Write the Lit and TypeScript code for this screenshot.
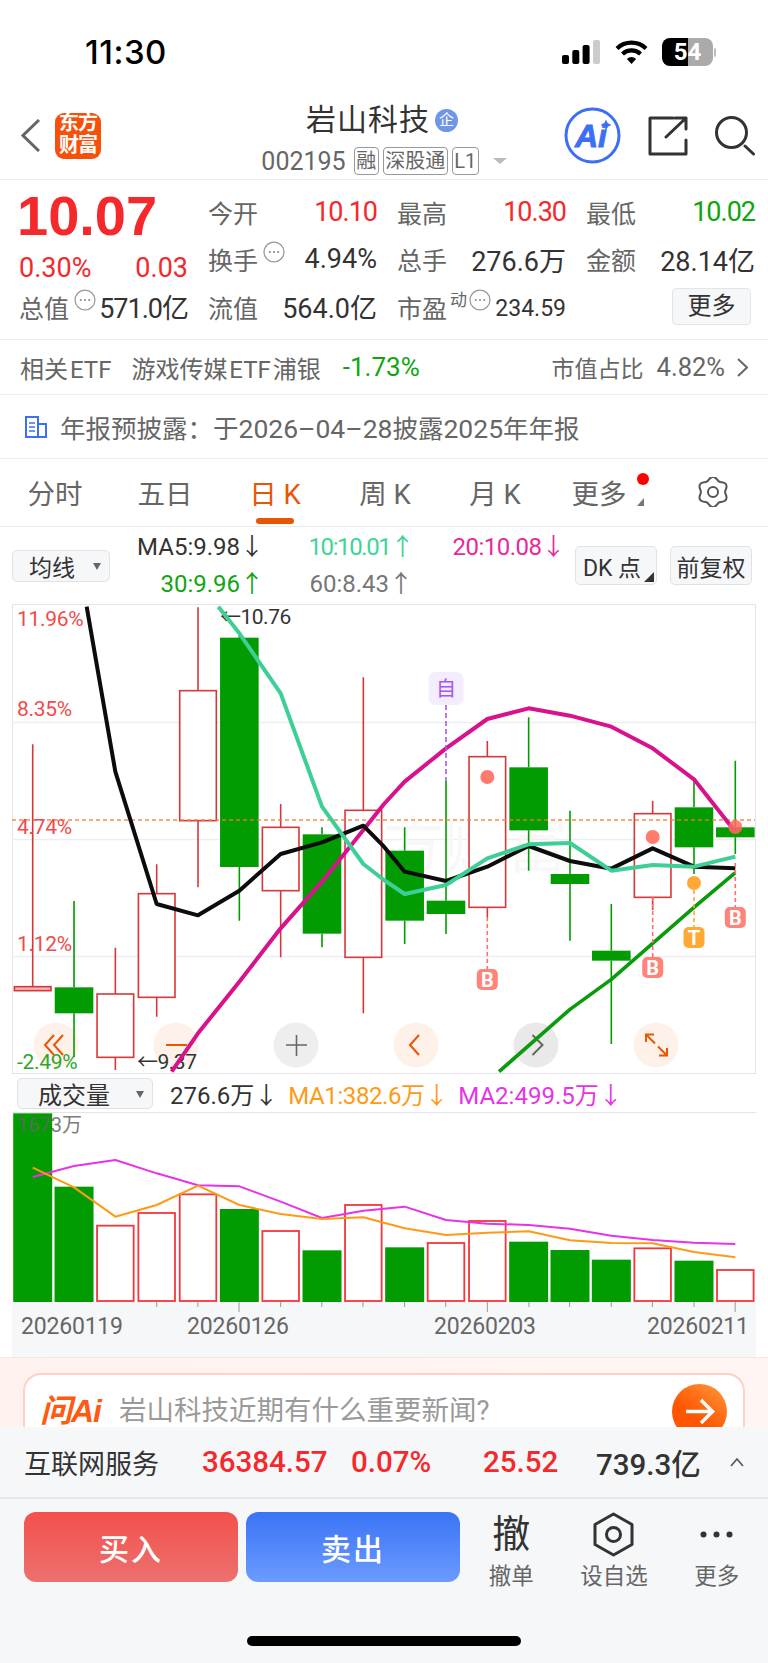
import { LitElement, html, css, svg } from "lit";
import { customElement } from "lit/decorators.js";

const RED = "#d8373a";
const GREEN = "#029c02";

// chart data below is read off the reference, in zoom units: page y = 600 + z / 3
const zy = (z: number) => 600 + z / 3;
const cx = (i: number) => 32.7 + 41.33 * i;

// wick top, wick bottom, body top, body bottom, rising
const candles: [number, number, number, number, boolean][] = [
  [433, 1160, 1160, 1172, true],
  [903, 1372, 1162, 1240, false],
  [1043, 1410, 1182, 1372, true],
  [793, 1250, 881, 1192, true],
  [22, 862, 272, 662, true],
  [100, 962, 113, 801, false],
  [612, 1072, 682, 872, true],
  [682, 1042, 703, 1001, false],
  [232, 1240, 631, 1072, true],
  [682, 1032, 752, 962, false],
  [542, 1002, 902, 942, false],
  [423, 952, 470, 922, true],
  [352, 812, 502, 691, false],
  [632, 1022, 822, 852, false],
  [912, 1332, 1052, 1082, false],
  [602, 930, 641, 892, true],
  [532, 822, 622, 742, false],
  [482, 762, 682, 712, false],
];

// x, y both in the 3x crop of the chart
const pts = (list: number[][], dx = 0) =>
  list.map(([x, y]) => `${dx + x / 3},${zy(y)}`).join(" ");

const ma5 =
  pts([[260, 20], [346, 515], [470, 912], [594, 946], [718, 872], [842, 762], [966, 727], [1090, 677]]) +
  " " +
  pts([[0, 740], [62, 815], [186, 843], [310, 800], [434, 738], [558, 783], [682, 806], [806, 745], [930, 800], [1054, 805]], 384);
const ma10 =
  pts([[655, 20], [718, 100], [842, 280], [966, 620], [1090, 792], [1152, 840]]) +
  " " +
  pts([[62, 882], [186, 855], [310, 775], [434, 733], [558, 729], [682, 812], [806, 795], [930, 800], [1054, 770]], 384);
const ma20 =
  pts([[515, 1415], [594, 1300], [718, 1145], [842, 985], [966, 845], [1090, 690], [1152, 612]]) +
  " " +
  pts([[62, 545], [186, 445], [310, 357], [434, 325], [558, 347], [682, 380], [806, 445], [930, 538], [1054, 695]], 384);
const ma30 = pts([[345, 1415], [558, 1228], [682, 1138], [806, 1030], [930, 922], [1054, 818]], 384);

// volume chart, crop is 2.0417x wide and 3x tall
const vx = (z: number) => z / 2.0417;
const vy = (z: number) => 1070 + z / 3;
const volTops = [130, 350, 467, 429, 373, 417, 483, 541, 405, 532, 519, 453, 515, 540, 569, 535, 572, 600];
const volUp = [0, 0, 1, 1, 1, 0, 1, 0, 1, 0, 1, 1, 0, 0, 0, 1, 0, 1];
const ma1 = [293, 352, 440, 405, 347, 405, 432, 447, 442, 475, 495, 488, 484, 511, 519, 520, 546, 562];
const ma2 = [321, 288, 270, 310, 346, 349, 395, 444, 422, 410, 450, 461, 465, 476, 497, 510, 518, 522];
const volLine = (list: number[]) => list.map((y, i) => `${cx(i)},${vy(y)}`).join(" ");

// round gear outline
const gearPath = () => {
  const out: string[] = [];
  for (let a = 0; a < 360; a += 6) {
    const t = (a * Math.PI) / 180;
    const r = 13.6 + 1.5 * Math.cos(6 * t);
    out.push(`${(16 + r * Math.sin(t)).toFixed(1)},${(15 - r * Math.cos(t)).toFixed(1)}`);
  }
  return out.join(" ");
};

const infoDots = html`<svg class="info" viewBox="0 0 21 21">
  <circle cx="10.5" cy="10.5" r="9.5" fill="none" stroke="#999" stroke-width="1.2"></circle>
  <circle cx="6.5" cy="10.5" r="1" fill="#888"></circle>
  <circle cx="10.5" cy="10.5" r="1" fill="#888"></circle>
  <circle cx="14.5" cy="10.5" r="1" fill="#888"></circle>
</svg>`;

@customElement("k-chart")
class KChart extends LitElement {
  static styles = css`
    :host {
      display: block;
      height: 471px;
    }
    svg {
      display: block;
      font-family: Roboto, "Noto Sans CJK SC", sans-serif;
    }
  `;

  tag(x: number, top: number, label: string, color: string) {
    return svg`
      <rect x=${x - 10.5} y=${top} width="21" height="21" rx="5" fill=${color}></rect>
      <text x=${x} y=${top + 17.5} font-size="20" font-weight="700" fill="#fff" text-anchor="middle">${label}</text>`;
  }

  render() {
    const buttons = [
      [56, "#fdf1ea"],
      [176, "#fdf1ea"],
      [296, "#eeeeee"],
      [416, "#fdf1ea"],
      [536, "#e9e9e9"],
      [656, "#fdf1ea"],
    ] as [number, string][];
    return html`<svg width="768" height="471" viewBox="0 604 768 471">
      <rect x="12.5" y="604.5" width="743" height="469" fill="#fff" stroke="#e4e5ec"></rect>
      <path d="M12 722.5H755M12 839.5H755M12 956.5H755" stroke="#edeef3" stroke-width="1.5"></path>
      <text x="320" y="868" font-size="62" fill="#f8f8f9">东方财富</text>
      ${buttons.map(([x, c]) => svg`<circle cx=${x} cy="1045" r="22.5" fill=${c}></circle>`)}
      <g fill="none" stroke="#ea5504" stroke-width="2">
        <path d="M54 1035l-9 10 9 10M63 1035l-9 10 9 10"></path>
        <path d="M166 1045h21"></path>
        <path d="M419 1035l-9 10 9 10"></path>
        <path d="M646 1042V1034.5H654M646 1034.5L655 1043.5M667 1048V1055.5H659M667 1055.5L658 1046.5"></path>
      </g>
      <path d="M286 1045h21M296.5 1035v21" stroke="#666" stroke-width="1.6" fill="none"></path>
      <path d="M532.5 1035l10 10-10 10" stroke="#666" stroke-width="2" fill="none"></path>
      ${candles.map(([wt, wb, bt, bb, up], i) => {
        const x = cx(i);
        const color = up ? RED : GREEN;
        const body = up
          ? svg`<rect x=${x - 18.3} y=${zy(bt)} width="36.6" height=${zy(bb) - zy(bt)} fill=${i === 0 ? "#f3b5b5" : "#fff"} stroke=${color} stroke-width="1.6"></rect>`
          : svg`<rect x=${x - 19.3} y=${zy(bt)} width="38.6" height=${zy(bb) - zy(bt)} fill=${color}></rect>`;
        return svg`<path d="M${x} ${zy(wt)}V${zy(bt)}M${x} ${zy(bb)}V${zy(wb)}" stroke=${color} stroke-width="1.6"></path>${body}`;
      })}
      <path d="M12 820H755" stroke="#f47b2c" stroke-width="1.5" stroke-dasharray="4 3" opacity=".85"></path>
      <g font-size="21" fill="#f04a4a" letter-spacing="-.3">
        <text x="17" y="626">11.96%</text>
        <text x="17" y="716">8.35%</text>
        <text x="17" y="834">4.74%</text>
        <text x="17" y="951">1.12%</text>
        <text x="17" y="1069" fill="#2aa82a">-2.49%</text>
      </g>
      <g font-size="21" fill="#333" letter-spacing="-.5">
        <text x="220" y="624">←10.76</text>
        <text x="137" y="1069">←9.37</text>
      </g>
      <g fill="none" stroke-linejoin="round">
        <polyline points=${ma30} stroke="#0b9a0b" stroke-width="3.6"></polyline>
        <polyline points=${ma20} stroke="#d8128a" stroke-width="4"></polyline>
        <polyline points=${ma5} stroke="#0c0c0c" stroke-width="4"></polyline>
        <polyline points=${ma10} stroke="#3dcf96" stroke-width="4"></polyline>
      </g>
      <rect x="428.5" y="672" width="35" height="33" rx="7" fill="#f4edff"></rect>
      <text x="446" y="696" font-size="20" fill="#a855f7" text-anchor="middle">自</text>
      <path d="M446 705V781" stroke="#a855f7" stroke-width="1.6" stroke-dasharray="5 3"></path>
      <g stroke-width="1.6" stroke-dasharray="4 3">
        <path d="M487.3 917V969M652.7 897V957M735.3 863V907" stroke="#ff6f66"></path>
        <path d="M694 883V927" stroke="#ffa833"></path>
      </g>
      <circle cx="487.3" cy="777" r="7" fill="#ff7b6e"></circle>
      <circle cx="652.7" cy="837" r="7" fill="#ff7b6e"></circle>
      <circle cx="694" cy="883" r="7" fill="#ffa833"></circle>
      <circle cx="735.3" cy="827" r="7" fill="#ff6a60" opacity=".85"></circle>
      ${this.tag(487.3, 969, "B", "#ff8378")}
      ${this.tag(652.7, 957, "B", "#ff8378")}
      ${this.tag(694, 927, "T", "#ffa833")}
      ${this.tag(735.3, 907, "B", "#ff8378")}
    </svg>`;
  }
}

@customElement("vol-chart")
class VolChart extends LitElement {
  static styles = css`
    :host {
      display: block;
      height: 245px;
    }
    svg {
      display: block;
      font-family: Roboto, "Noto Sans CJK SC", sans-serif;
    }
  `;

  render() {
    const ticks = [320, 404, 488, 573, 657, 741, 826, 910, 995, 1080, 1163, 1248, 1332, 1417, 1501];
    const long = [488, 995, 1501];
    return html`<svg width="768" height="245" viewBox="0 1112 768 245">
      <rect x="12" y="1112" width="744" height="245" fill="#f6f7f9"></rect>
      <rect x="12" y="1113" width="744" height="189" fill="#fff"></rect>
      <path d="M12 1112.5H756" stroke="#e4e5ec"></path>
      ${volTops.map((t, i) => {
        const x = cx(i);
        const top = vy(t);
        return volUp[i]
          ? svg`<rect x=${x - 18.3} y=${top} width="36.6" height=${1301 - top} fill="#fff" stroke="#f5353b" stroke-width="1.8"></rect>`
          : svg`<rect x=${x - 19.5} y=${top} width="39" height=${1302 - top} fill=${GREEN}></rect>`;
      })}
      <text x="17" y="1132" font-size="20" fill="#666" opacity=".85">1673万</text>
      <g fill="none" stroke-linejoin="round" stroke-width="2">
        <polyline points=${volLine(ma2)} stroke="#e633e6"></polyline>
        <polyline points=${volLine(ma1)} stroke="#ff9a14"></polyline>
      </g>
      ${ticks.map((t) => {
        const x = vx(t);
        const end = long.includes(t) ? 1312 : 1307;
        return svg`<path d="M${x} 1302V${end}" stroke="#9a9a9a" stroke-width="1"></path>`;
      })}
      <g font-size="23" fill="#666" letter-spacing="-.2">
        <text x="21" y="1334">20260119</text>
        <text x="187" y="1334">20260126</text>
        <text x="434" y="1334">20260203</text>
        <text x="647" y="1334">20260211</text>
      </g>
    </svg>`;
  }
}

@customElement("app-root")
class AppRoot extends LitElement {
  static styles = css`
    :host {
      display: block;
      width: 768px;
      height: 1663px;
      overflow: hidden;
      background: #fff;
      color: #333;
      font-family: Roboto, "Noto Sans CJK SC", sans-serif;
    }
    .status {
      height: 104px;
      display: flex;
      align-items: center;
      padding: 0 52px 0 85px;
      box-sizing: border-box;
    }
    .time {
      font-size: 33px;
      font-weight: 500;
      color: #000;
      flex: 1;
      font-family: Inter, sans-serif;
      letter-spacing: 0.5px;
    }
    .status svg {
      display: block;
    }
    .wifi {
      margin: 0 14px 0 15px;
    }
    .battery {
      width: 51px;
      height: 28px;
      border-radius: 8px;
      background: linear-gradient(90deg, #000 0 26px, #aaa 26px);
      color: #fff;
      font-size: 24px;
      font-weight: 700;
      line-height: 28px;
      text-align: center;
    }
    .nub {
      width: 2px;
      height: 9px;
      background: #bbb;
      border-radius: 0 2px 2px 0;
      margin-left: 1px;
    }

    .nav {
      height: 76px;
      display: grid;
      grid-template-columns: 1fr auto 1fr;
      grid-template-rows: 63px;
      align-items: center;
      border-bottom: 1px solid #ececec;
      box-sizing: border-box;
    }
    .nav-left {
      display: flex;
      align-items: center;
      gap: 15px;
      padding-left: 21px;
    }
    .logo {
      width: 46px;
      height: 46px;
      border-radius: 9px;
      background: #f7500a;
      color: #fff;
      font-size: 20px;
      font-weight: 700;
      line-height: 21px;
      text-align: center;
    }
    .logo div {
      height: 22px;
      letter-spacing: -1px;
    }
    .nav-mid {
      display: flex;
      flex-direction: column;
      align-items: center;
      align-self: start;
    }
    .title {
      display: flex;
      align-items: center;
      gap: 5px;
      font-size: 30px;
      line-height: 38px;
      height: 38px;
      margin: -3px 4px 0 0;
      color: #333;
      letter-spacing: 1px;
    }
    .qi {
      width: 23px;
      height: 23px;
      border-radius: 50%;
      background: #6f96e6;
      color: #fff;
      font-size: 15px;
      line-height: 23px;
      text-align: center;
      letter-spacing: 0;
    }
    .sub {
      display: flex;
      align-items: center;
      height: 30px;
      margin-top: 7px;
      font-size: 25px;
      color: #666;
    }
    .tagbox {
      border: 1px solid #999;
      border-radius: 4px;
      font-size: 20px;
      line-height: 26px;
      height: 26px;
      padding: 0 1.5px;
      margin-left: 4px;
      color: #666;
    }
    .sub .first {
      margin-left: 8px;
    }
    .caret {
      width: 0;
      height: 0;
      border-left: 7px solid transparent;
      border-right: 7px solid transparent;
      border-top: 6px solid #bbb;
      margin-left: 14px;
    }
    .nav-right {
      display: flex;
      align-items: center;
      justify-content: flex-end;
      padding-right: 12px;
      gap: 27px;
    }
    .nav-right svg {
      display: block;
    }
    .aimark {
      font-family: "Liberation Sans", sans-serif;
      font-style: italic;
      font-weight: 700;
    }

    .quote {
      display: grid;
      grid-template-columns: repeat(4, 169px);
      grid-auto-rows: 47.5px;
      column-gap: 20px;
      padding: 8px 14px 8px 19px;
      height: 160px;
      box-sizing: border-box;
      border-bottom: 1px solid #ececec;
      font-size: 27px;
    }
    .price {
      grid-row: span 2;
    }
    .big {
      font-family: "Liberation Sans", sans-serif;
      font-size: 56px;
      font-weight: 700;
      line-height: 55px;
      margin-left: -2px;
      color: #f5282b;
    }
    .change {
      display: flex;
      justify-content: space-between;
      color: #f5282b;
      margin-top: 10px;
      line-height: 30px;
    }
    .cell {
      display: flex;
      align-items: center;
    }
    .lbl {
      color: #666;
      font-size: 25px;
    }
    .val {
      margin-left: auto;
      color: #333;
    }
    .ones {
      letter-spacing: -1px;
    }
    .red {
      color: #f5282b;
    }
    .green {
      color: #0ea60e;
    }
    .info {
      width: 22px;
      height: 22px;
      margin: -14px 0 0 5px;
    }
    .small {
      font-size: 23px;
      margin-top: 3px;
    }
    .sup {
      font-size: 17px;
      color: #666;
      margin: -16px -3px 0 3px;
    }
    .more {
      margin-left: auto;
      margin-right: 4px;
      width: 79px;
      height: 37px;
      box-sizing: border-box;
      border: 1px solid #e3e5e8;
      border-radius: 4px;
      background: #f6f7f9;
      font-size: 24px;
      line-height: 35px;
      text-align: center;
    }

    .etf {
      height: 55px;
      display: flex;
      align-items: center;
      padding: 0 20px;
      border-bottom: 1px solid #ececec;
      box-sizing: border-box;
      font-size: 24px;
      word-spacing: -4px;
      color: #666;
    }
    .etf .pct {
      margin-left: 22px;
      font-size: 26px;
    }
    .etf .name {
      margin-left: 20px;
    }
    .etf .share {
      margin-left: auto;
      font-size: 23px;
    }
    .etf .sv {
      margin-left: 13px;
      font-size: 25.5px;
    }
    .etf svg {
      margin-left: 12px;
      display: block;
    }

    .notice {
      height: 64px;
      display: flex;
      align-items: center;
      gap: 13px;
      padding-left: 24px;
      border-bottom: 1px solid #ececec;
      box-sizing: border-box;
      font-size: 25.5px;
      color: #666;
    }
    .notice b {
      font-weight: 400;
      font-size: 26.5px;
    }

    .tabs {
      height: 68px;
      border-bottom: 1px solid #ececec;
      box-sizing: border-box;
      display: flex;
      align-items: center;
      font-size: 27.5px;
      color: #666;
      padding-bottom: 2px;
    }
    .tab {
      width: 110px;
      text-align: center;
      flex: none;
      position: relative;
    }
    .tab.last {
      width: 98px;
    }
    .tab.on {
      color: #ea5504;
    }
    .tab.on::after {
      content: "";
      position: absolute;
      left: 36px;
      right: 36px;
      bottom: -12px;
      height: 6px;
      border-radius: 3px;
      background: #ea5504;
    }
    .dot {
      position: absolute;
      right: -1px;
      top: 1px;
      width: 12px;
      height: 12px;
      border-radius: 50%;
      background: #f00;
    }
    .corner {
      position: absolute;
      right: 4px;
      bottom: 6px;
      width: 0;
      height: 0;
      border-left: 7px solid transparent;
      border-bottom: 8px solid #777;
    }
    .gear {
      margin-left: 49px;
      display: block;
    }

    .ma {
      height: 77px;
      display: flex;
      align-items: center;
      padding-left: 12px;
    }
    .pick {
      box-sizing: border-box;
      background: #f6f7f9;
      border: 1px solid #e0e2e6;
      border-radius: 5px;
      display: flex;
      align-items: center;
      justify-content: center;
      color: #333;
      position: relative;
    }
    .junxian {
      width: 98px;
      height: 32px;
      font-size: 23px;
      padding-right: 18px;
    }
    .tri {
      position: absolute;
      right: 8px;
      top: 50%;
      margin-top: -3px;
      width: 0;
      height: 0;
      border-left: 4px solid transparent;
      border-right: 4px solid transparent;
      border-top: 7px solid #666;
    }
    .ma-grid {
      width: 443px;
      margin-left: 12px;
      display: grid;
      grid-template-columns: 142px 149px 152px;
      grid-auto-rows: 37px;
      font-size: 24px;
      line-height: 37px;
      text-align: right;
      flex: none;
    }
    .ma-grid .teal {
      color: #3ed598;
      letter-spacing: -1.4px;
    }
    .ma-grid .pink {
      color: #e62a9c;
      letter-spacing: -0.5px;
    }
    .ma-grid .leaf {
      color: #12a512;
    }
    .ma-grid .grey {
      color: #777;
    }
    .ma-btn {
      height: 39px;
      font-size: 23px;
    }
    .dk {
      width: 82px;
      margin-left: 10px;
      padding-right: 8px;
    }
    .dk::after {
      content: "";
      position: absolute;
      right: 2px;
      bottom: 2px;
      width: 0;
      height: 0;
      border-left: 10px solid transparent;
      border-bottom: 10px solid #333;
    }
    .fq {
      width: 82px;
      margin-left: 13px;
    }

    .volrow {
      height: 37px;
      display: flex;
      align-items: center;
      gap: 10px;
      padding-left: 17px;
      font-size: 24px;
    }
    .volsel {
      width: 136px;
      height: 31px;
      padding-right: 22px;
      margin-right: 7px;
      font-size: 24px;
    }
    .vma1 {
      color: #ff9a14;
      letter-spacing: -0.4px;
    }
    .vma2 {
      color: #e633e6;
    }

    .ask {
      height: 70px;
      overflow: hidden;
      padding: 15px 23px 0;
      box-sizing: border-box;
      background: linear-gradient(90deg, #fff2ee, #fff6f3);
      border-top: 1px solid #f0e6e4;
    }
    .ask-card {
      height: 90px;
      box-sizing: border-box;
      background: #fff;
      border: 2px solid #ffcfc8;
      border-radius: 18px;
      display: flex;
      align-items: flex-start;
      padding: 15px 16px 0 15px;
      font-size: 27.5px;
      color: #9a9a9a;
    }
    .wen {
      font-family: "Liberation Sans", "Noto Sans CJK SC", sans-serif;
      font-style: italic;
      font-weight: 700;
      font-size: 32px;
      color: #ff5a12;
      margin-right: 18px;
      line-height: 42px;
      letter-spacing: -1px;
    }
    .ask-q {
      line-height: 42px;
      flex: 1;
    }
    .go {
      width: 55px;
      height: 55px;
      margin-top: -6px;
      border-radius: 50%;
      background: linear-gradient(215deg, #ff9a3c, #ff5500 60%);
    }
    .go svg {
      display: block;
    }

    .panel {
      height: 236px;
      background: #f6f7f9;
    }
    .sector {
      height: 72px;
      display: grid;
      grid-template-columns: 178px 149px 132px 113px 134px auto;
      align-items: center;
      padding-left: 24px;
      border-bottom: 2px solid #e6e7e9;
      box-sizing: border-box;
      font-size: 27px;
    }
    .sector .num {
      font-weight: 500;
      font-size: 29.5px;
    }
    .trade {
      display: flex;
      padding: 13px 0 0 24px;
      align-items: flex-start;
    }
    .btn {
      width: 214px;
      height: 70px;
      border-radius: 12px;
      color: #fff;
      font-size: 30px;
      font-weight: 500;
      display: flex;
      align-items: center;
      justify-content: center;
      letter-spacing: 2px;
    }
    .buy {
      background: linear-gradient(180deg, #f4504c, #ec716e);
    }
    .sell {
      background: linear-gradient(180deg, #3a74f5, #6b9bff);
      margin-left: 8px;
    }
    .acts {
      flex: 1;
      display: grid;
      grid-template-columns: repeat(3, 1fr);
    }
    .act {
      display: flex;
      flex-direction: column;
      align-items: center;
      color: #666;
      font-size: 22.5px;
      line-height: 30px;
    }
    .act-icon {
      height: 45px;
      margin-bottom: 4px;
      font-size: 38px;
      line-height: 45px;
      color: #333;
      display: flex;
      align-items: center;
    }
    .act-icon svg {
      display: block;
    }
    .home {
      width: 274px;
      height: 10px;
      border-radius: 5px;
      background: #000;
      margin: 45px 0 0 247px;
    }
  `;

  render() {
    return html`
      <div class="status">
        <div class="time">11:30</div>
        <svg width="38" height="24" viewBox="0 0 38 24">
          <rect x="0" y="15" width="7" height="9" rx="2" fill="#000"></rect>
          <rect x="10.3" y="10" width="7" height="14" rx="2" fill="#000"></rect>
          <rect x="20.6" y="5" width="7" height="19" rx="2" fill="#000"></rect>
          <rect x="31" y="0" width="7" height="24" rx="2" fill="#ccc"></rect>
        </svg>
        <svg class="wifi" width="33" height="24" viewBox="0 0 33 24" fill="none" stroke="#000" stroke-width="4.2">
          <path d="M2 8.5a21 21 0 0 1 29 0"></path>
          <path d="M7.5 14a13.2 13.2 0 0 1 18 0"></path>
          <path d="M16.5 24l-4.6-5a6.5 6.5 0 0 1 9.2 0z" fill="#000" stroke="none"></path>
        </svg>
        <div class="battery">54</div>
        <div class="nub"></div>
      </div>

      <div class="nav">
        <div class="nav-left">
          <svg width="19" height="33" viewBox="0 0 19 33" fill="none" stroke="#666" stroke-width="3">
            <path d="M18 1L2 16.5 18 32"></path>
          </svg>
          <div class="logo"><div>东方</div><div>财富</div></div>
        </div>
        <div class="nav-mid">
          <div class="title">岩山科技<span class="qi">企</span></div>
          <div class="sub">
            002195<span class="tagbox first">融</span><span class="tagbox">深股通</span><span class="tagbox">L1</span>
            <span class="caret"></span>
          </div>
        </div>
        <div class="nav-right">
          <svg width="57" height="57" viewBox="0 0 57 57">
            <circle cx="28.5" cy="28.5" r="26.5" fill="none" stroke="#3b6ff5" stroke-width="3"></circle>
            <text class="aimark" x="11" y="40" font-size="32" fill="#3b6ff5" stroke="#3b6ff5" stroke-width=".9">Ai</text>
            <path d="M42 12.5l1.7 3.8 3.8 1.7-3.8 1.7-1.7 3.8-1.7-3.8-3.8-1.7 3.8-1.7z" fill="#3b6ff5"></path>
          </svg>
          <svg width="40" height="40" viewBox="0 0 40 40" fill="none" stroke="#333" stroke-width="3" stroke-linecap="round" stroke-linejoin="round">
            <path d="M25 2H2V38H38V24"></path>
            <path d="M18 21L38 2M27 2H38V13"></path>
          </svg>
          <svg width="41" height="40" viewBox="0 0 41 40" fill="none" stroke="#333" stroke-width="3" stroke-linecap="round">
            <circle cx="16.5" cy="16.5" r="15"></circle>
            <path d="M30 30L38.5 38"></path>
          </svg>
        </div>
      </div>

      <div class="quote">
        <div class="price">
          <div class="big">10.07</div>
          <div class="change"><span>0.30%</span><span>0.03</span></div>
        </div>
        <div class="cell"><span class="lbl">今开</span><span class="val red ones">10.10</span></div>
        <div class="cell"><span class="lbl">最高</span><span class="val red ones">10.30</span></div>
        <div class="cell"><span class="lbl">最低</span><span class="val green ones">10.02</span></div>
        <div class="cell"><span class="lbl">换手</span>${infoDots}<span class="val">4.94%</span></div>
        <div class="cell"><span class="lbl">总手</span><span class="val">276.6万</span></div>
        <div class="cell"><span class="lbl">金额</span><span class="val">28.14亿</span></div>
        <div class="cell"><span class="lbl">总值</span>${infoDots}<span class="val ones">571.0亿</span></div>
        <div class="cell"><span class="lbl">流值</span><span class="val">564.0亿</span></div>
        <div class="cell">
          <span class="lbl">市盈</span><span class="sup">动</span>${infoDots}<span class="val small">234.59</span>
        </div>
        <div class="cell"><div class="more">更多</div></div>
      </div>

      <div class="etf">
        <span>相关 ETF</span><span class="name">游戏传媒 ETF 浦银</span><span class="pct green">-1.73%</span>
        <span class="share">市值占比</span><span class="sv">4.82%</span>
        <svg width="11" height="19" viewBox="0 0 11 19" fill="none" stroke="#666" stroke-width="2"><path d="M1 1l9 8.5L1 18"></path></svg>
      </div>

      <div class="notice">
        <svg width="23" height="22" viewBox="0 0 23 22" fill="none" stroke="#3b6ff5" stroke-width="2">
          <path d="M2 1H14V21H2zM14 8H22V21H14"></path>
          <path d="M5 7H11M5 11H11M5 15H11" stroke-width="1.6"></path>
        </svg>
        <span>年报预披露：于<b>2026–04–28</b>披露<b>2025</b>年年报</span>
      </div>

      <div class="tabs">
        <div class="tab">分时</div>
        <div class="tab">五日</div>
        <div class="tab on">日 K</div>
        <div class="tab">周 K</div>
        <div class="tab">月 K</div>
        <div class="tab last">更多<span class="dot"></span><span class="corner"></span></div>
        <svg class="gear" width="32" height="30" viewBox="0 0 32 30" fill="none" stroke="#555" stroke-width="2">
          <polygon points=${gearPath()}></polygon>
          <circle cx="16" cy="15" r="5"></circle>
        </svg>
      </div>

      <div class="ma">
        <div class="pick junxian">均线<span class="tri"></span></div>
        <div class="ma-grid">
          <span>MA5:9.98↓</span>
          <span class="teal">10:10.01↑</span>
          <span class="pink">20:10.08↓</span>
          <span class="leaf">30:9.96↑</span>
          <span class="grey">60:8.43↑</span>
        </div>
        <div class="pick ma-btn dk">DK 点</div>
        <div class="pick ma-btn fq">前复权</div>
      </div>

      <k-chart></k-chart>

      <div class="volrow">
        <div class="pick volsel">成交量<span class="tri"></span></div>
        <span>276.6万↓</span>
        <span class="vma1">MA1:382.6万↓</span>
        <span class="vma2">MA2:499.5万↓</span>
      </div>

      <vol-chart></vol-chart>

      <div class="ask">
        <div class="ask-card">
          <span class="wen">问Ai</span>
          <span class="ask-q">岩山科技近期有什么重要新闻?</span>
          <div class="go">
            <svg width="55" height="55" viewBox="0 0 55 55" fill="none" stroke="#fff" stroke-width="3.5">
              <path d="M14 27.5H40M29 16l11.5 11.5L29 39"></path>
            </svg>
          </div>
        </div>
      </div>

      <div class="panel">
        <div class="sector">
          <span>互联网服务</span>
          <span class="num red">36384.57</span>
          <span class="num red">0.07%</span>
          <span class="num red">25.52</span>
          <span class="num">739.3亿</span>
          <svg width="14" height="9" viewBox="0 0 14 9" fill="none" stroke="#555" stroke-width="1.6"><path d="M1 8l6-7 6 7"></path></svg>
        </div>
        <div class="trade">
          <div class="btn buy">买入</div>
          <div class="btn sell">卖出</div>
          <div class="acts">
            <div class="act"><div class="act-icon">撤</div>撤单</div>
            <div class="act">
              <div class="act-icon">
                <svg width="41" height="45" viewBox="0 0 41 45" fill="none" stroke="#333" stroke-width="3" stroke-linejoin="round">
                  <path d="M20.5 2L39 12.5V32.5L20.5 43 2 32.5V12.5z"></path>
                  <circle cx="20.5" cy="22.5" r="7"></circle>
                </svg>
              </div>
              设自选
            </div>
            <div class="act">
              <div class="act-icon">
                <svg width="33" height="7" viewBox="0 0 33 7" fill="#333">
                  <circle cx="3.5" cy="3.5" r="3"></circle>
                  <circle cx="16.5" cy="3.5" r="3"></circle>
                  <circle cx="29.5" cy="3.5" r="3"></circle>
                </svg>
              </div>
              更多
            </div>
          </div>
        </div>
        <div class="home"></div>
      </div>
    `;
  }
}
